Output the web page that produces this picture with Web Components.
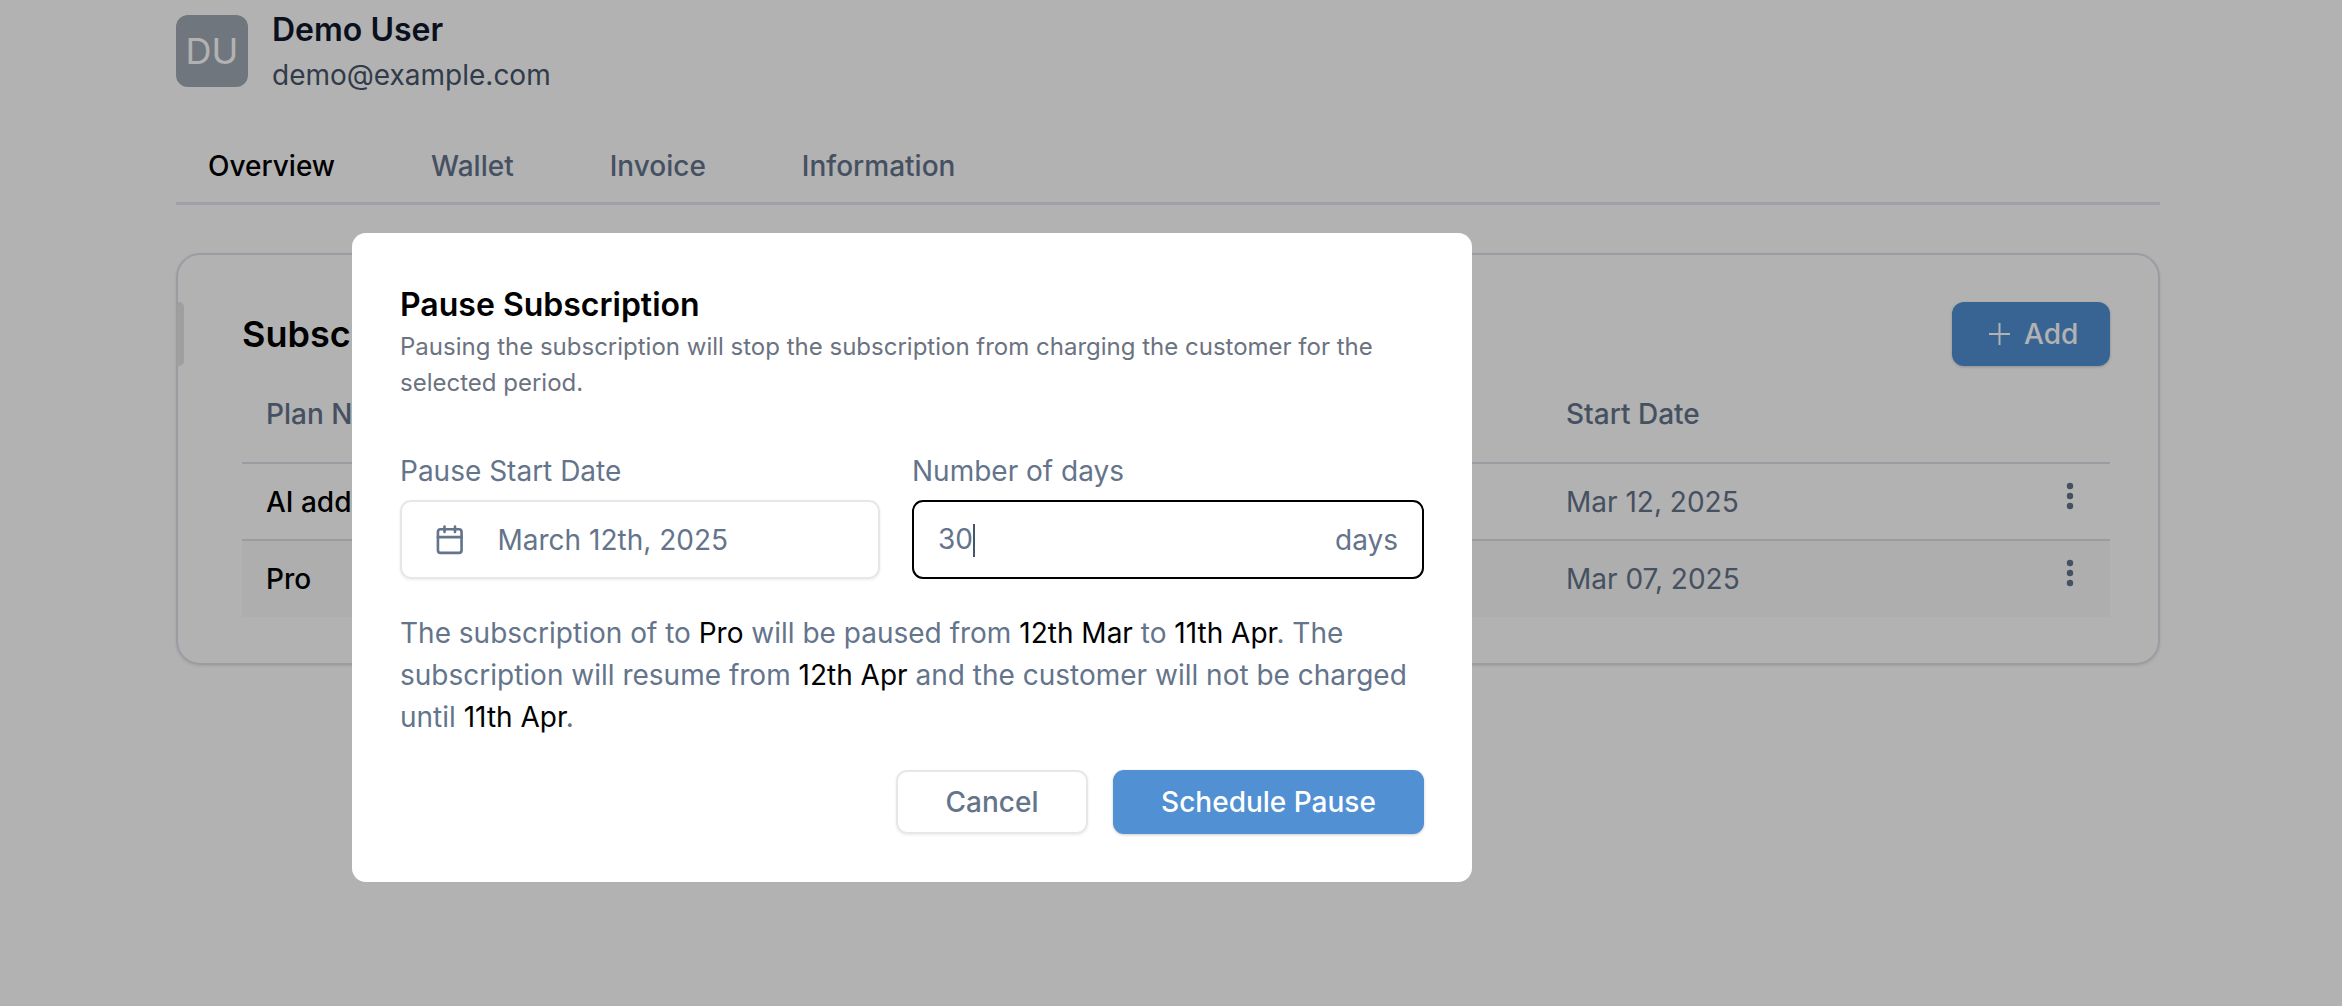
<!DOCTYPE html>
<html><head><meta charset="utf-8"><style>
html,body{margin:0;height:100%;background:#fff;font-family:Inter,"Liberation Sans",sans-serif;overflow:hidden}
</style></head><body>
<app-page></app-page>
<pause-modal></pause-modal>
<script>
const base=':host{box-sizing:border-box}*{box-sizing:border-box}';
const dots='<svg class="dots" viewBox="0 0 24 30" fill="#64748b"><circle cx="12" cy="5" r="3.2"/><circle cx="12" cy="15" r="3.2"/><circle cx="12" cy="25" r="3.2"/></svg>';
class AppPage extends HTMLElement{constructor(){super();this.attachShadow({mode:'open'}).innerHTML=`<style>${base}
:host{display:block;width:2342px;height:1006px;padding:15px 182px 0 176px;color:#000}
.head{display:flex;gap:24px;height:72px}
.avatar{width:72px;height:72px;border-radius:12px;background:#a1a9b4;color:#fff;display:flex;align-items:center;justify-content:center;font-size:36px}
.name{font-size:32px;font-weight:600;color:#0f172a;line-height:36px;margin-top:-3px}
.email{font-size:28px;color:#475569;line-height:36px;margin-top:9px}
.tabs{display:flex;margin-top:33px;height:85px;border-bottom:3px solid #e2e8f0;padding:10px 0 0 32px;gap:96px;font-size:28px;font-weight:500;color:#64748b;align-items:center}
.tabs b{font-weight:500;color:#000}
.card{margin-top:48px;height:412px;border:2px solid #dbe1e8;border-radius:24px;position:relative;padding:47px 48px 0 64px;box-shadow:0 1px 3px rgba(0,0,0,.1)}
.bar{position:absolute;left:-1px;top:47px;width:7px;height:64px;background:#e4e4e4;border-radius:0 5px 5px 0}
.top{display:flex;justify-content:space-between;height:64px}
h2{margin:0;font-size:36px;font-weight:600;line-height:64px}
.add{width:158px;height:64px;background:#5090d3;color:#fff;border-radius:12px;display:flex;align-items:center;padding-left:37px;gap:14px;font-size:28px;font-weight:500;box-shadow:0 1px 3px rgba(0,0,0,.2)}
.row{display:grid;grid-template-columns:1300px 1fr 60px;align-items:center;padding-left:24px;color:#64748b;font-size:28px;height:77px;border-bottom:2px solid #dbe1e8}
.row.h{height:98px;font-weight:500}
.row.last{border-bottom:none;background:#f9f9f9;height:76px}
.row b{font-weight:500;color:#000}
.dots{width:24px;height:30px;margin:-12px 0 0 8px}
</style>
<div class="head"><div class="avatar">DU</div><div><div class="name">Demo User</div><div class="email">demo@example.com</div></div></div>
<div class="tabs"><b>Overview</b><span>Wallet</span><span>Invoice</span><span>Information</span></div>
<div class="card"><div class="bar"></div>
<div class="top"><h2>Subscriptions</h2><div class="add"><svg width="21" height="22" viewBox="0 0 21 22" fill="none" stroke="currentColor" stroke-width="2"><path d="M10.5 0v22M0 11h21"/></svg>Add</div></div>
<div class="row h"><span>Plan Name</span><span>Start Date</span><span></span></div>
<div class="row"><b>AI add-on</b><span>Mar 12, 2025</span>${dots}</div>
<div class="row last"><b>Pro</b><span>Mar 07, 2025</span>${dots}</div>
</div>`}}
customElements.define('app-page',AppPage);
class PauseModal extends HTMLElement{constructor(){super();this.attachShadow({mode:'open'}).innerHTML=`<style>${base}
:host{position:fixed;inset:0;background:rgba(0,0,0,.3);display:block}
.m{position:absolute;left:352px;top:233px;width:1120px;height:649px;background:#fff;border-radius:14px;padding:48px}
h3{margin:0;font-size:32px;font-weight:600;line-height:48px;color:#000}
.d{margin:0;font-size:24px;line-height:36px;color:#6b7280}
.g{display:grid;grid-template-columns:480px 1fr;gap:32px;margin-top:52px}
label{display:block;font-size:28px;line-height:36px;color:#64748b;margin-bottom:11px}
.i{height:79px;border:2px solid #e5e7eb;border-radius:11px;display:flex;align-items:center;font-size:28px;color:#64748b;box-shadow:0 1px 3px rgba(0,0,0,.08);padding:0 29px 0 32px}
.i svg{margin-right:32px;flex:none}
.f{border:2px solid #000;box-shadow:none;justify-content:space-between;padding:0 24px}
.c{display:inline-block;width:2px;height:33px;background:#475569;vertical-align:middle;margin-top:-3px}
p{margin:33px 0 0;font-size:28px;line-height:42px;color:#64748b}
p b{font-weight:400;color:#000}
.a{display:flex;justify-content:flex-end;gap:25px;margin-top:32px}
.btn{height:64px;border-radius:11px;display:flex;align-items:center;justify-content:center;font-size:28px;font-weight:500}
.x{width:192px;border:2px solid #e5e7eb;color:#64748b;box-shadow:0 1px 3px rgba(0,0,0,.08)}
.s{width:311px;background:#5090d3;color:#fff;box-shadow:0 1px 3px rgba(0,0,0,.2)}
</style><div class="m">
<h3>Pause Subscription</h3>
<div class="d">Pausing the subscription will stop the subscription from charging the customer for the selected period.</div>
<div class="g"><div><label>Pause Start Date</label><div class="i"><svg width="31.5" height="31.5" viewBox="0 0 24 24" fill="none" stroke="#64748b" stroke-width="2" stroke-linecap="round" stroke-linejoin="round"><path d="M8 2v4"/><path d="M16 2v4"/><rect x="3" y="4" width="18" height="18" rx="2"/><path d="M3 10h18"/></svg>March 12th, 2025</div></div>
<div><label>Number of days</label><div class="i f"><span>30<span class="c"></span></span><span>days</span></div></div></div>
<p>The subscription of to <b>Pro</b> will be paused from <b>12th Mar</b> to <b>11th Apr</b>. The subscription will resume from <b>12th Apr</b> and the customer will not be charged until <b>11th Apr</b>.</p>
<div class="a"><div class="btn x">Cancel</div><div class="btn s">Schedule Pause</div></div>
</div>`}}
customElements.define('pause-modal',PauseModal);
</script></body></html>
